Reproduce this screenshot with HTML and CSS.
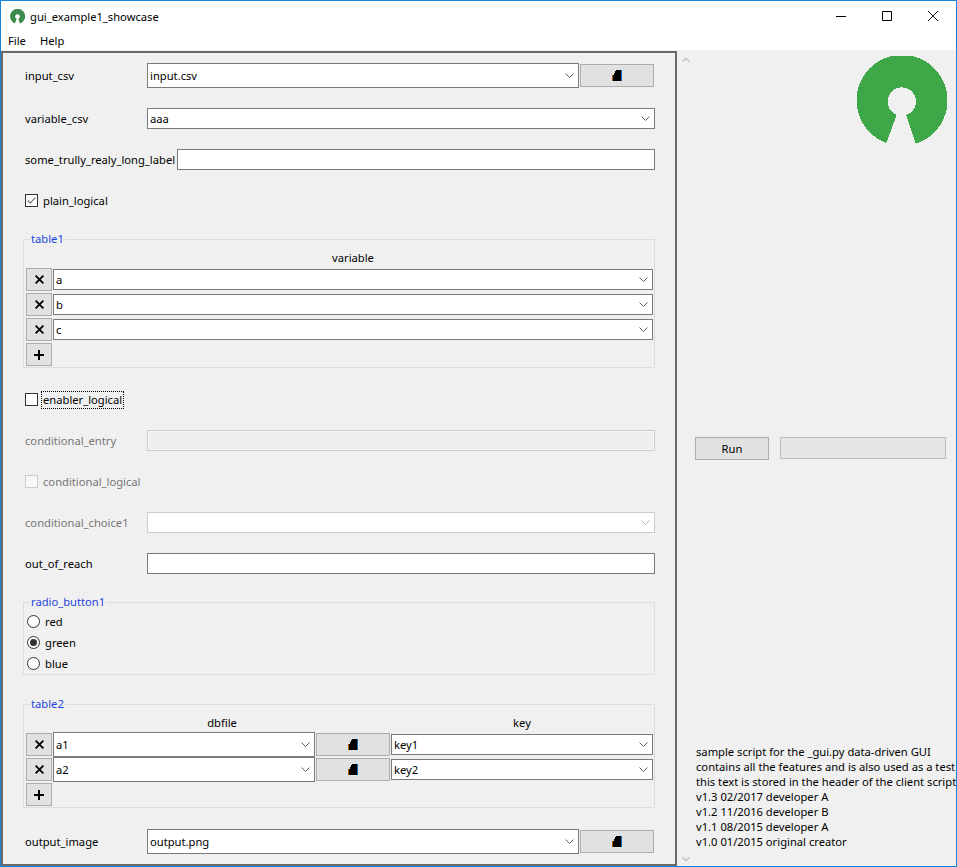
FILE: index.html
```html
<!DOCTYPE html>
<html lang="en">
<head>
<meta charset="utf-8">
<title>gui_example1_showcase</title>
<link rel="stylesheet" href="styles.css">
</head>
<body>
<svg class="sprite" xmlns="http://www.w3.org/2000/svg">
  <symbol id="chev" viewBox="0 0 9 5"><path d="M.5 .5 4.5 4.5 8.5 .5" fill="none" stroke="currentColor" stroke-width="1"/></symbol>
  <symbol id="folder" viewBox="0 0 10 11"><path d="M0 5V11H1V5Z" fill="#b85c00"/><path d="M1 11V5H2V3H3V1H4V0H9V11Z" fill="#000"/><path d="M9 0H10V11H9Z" fill="#0a6fc0"/></symbol>
  <symbol id="x" viewBox="0 0 9 9"><path d="M.6 .6 8.4 8.4M8.4 .6 .6 8.4" fill="none" stroke="#000" stroke-width="1.8"/></symbol>
  <symbol id="plus" viewBox="0 0 10 10"><path d="M0 5H10M5 0V10" fill="none" stroke="#000" stroke-width="2"/></symbol>
  <symbol id="osi" viewBox="0 0 91 91"><path d="M30.3 87A45.5 45.5 0 1 1 59.7 87.7L50.3 59A14.2 14.2 0 1 0 40.7 58.8Z" fill="currentColor"/></symbol>
  <symbol id="check" viewBox="0 0 13 13"><path d="M2 6.5 5 9.5 11 3" fill="none" stroke="#666" stroke-width="1.3"/></symbol>
</svg>
<div class="window">
  <header class="titlebar">
    <svg class="app-icon"><use href="#osi"/></svg>
    <span class="app-title">gui_example1_showcase</span>
    <div class="controls">
      <div class="control"><svg class="ctl" viewBox="0 0 10 10"><path d="M0 5.5H10" stroke="#000" fill="none"/></svg></div>
      <div class="control"><svg class="ctl" viewBox="0 0 10 10"><path d="M.5 .5H9.5V9.5H.5Z" stroke="#000" fill="none"/></svg></div>
      <div class="control"><svg class="ctl" viewBox="0 0 10 10"><path d="M0 0 10 10M10 0 0 10" stroke="#000" fill="none" stroke-width=".9"/></svg></div>
    </div>
  </header>
  <nav class="menubar"><span>File</span><span>Help</span></nav>
  <main class="main">
    <section class="form">
      <div class="row">
        <label class="label">input_csv</label>
        <div class="combo tall"><span class="value">input.csv</span><svg class="chev"><use href="#chev"/></svg></div>
        <button class="btn file"><svg class="folder"><use href="#folder"/></svg></button>
      </div>
      <div class="row">
        <label class="label">variable_csv</label>
        <div class="combo"><span class="value">aaa</span><svg class="chev"><use href="#chev"/></svg></div>
      </div>
      <div class="row">
        <label class="label long">some_trully_realy_long_label</label>
        <div class="entry"></div>
      </div>
      <div class="row">
        <span class="box"><svg class="check"><use href="#check"/></svg></span>
        <span class="box-label">plain_logical</span>
      </div>
      <div class="frame">
        <span class="legend">table1</span>
        <div class="thead"><span class="th">variable</span></div>
        <div class="trow"><button class="btn icon"><svg class="ix"><use href="#x"/></svg></button><div class="combo"><span class="value">a</span><svg class="chev"><use href="#chev"/></svg></div></div>
        <div class="trow"><button class="btn icon"><svg class="ix"><use href="#x"/></svg></button><div class="combo"><span class="value">b</span><svg class="chev"><use href="#chev"/></svg></div></div>
        <div class="trow"><button class="btn icon"><svg class="ix"><use href="#x"/></svg></button><div class="combo"><span class="value">c</span><svg class="chev"><use href="#chev"/></svg></div></div>
        <button class="btn icon add"><svg class="ip"><use href="#plus"/></svg></button>
      </div>
      <div class="row">
        <span class="box"></span>
        <span class="box-label focus">enabler_logical</span>
      </div>
      <div class="row disabled">
        <label class="label">conditional_entry</label>
        <div class="entry off"></div>
      </div>
      <div class="row disabled">
        <span class="box"></span>
        <span class="box-label">conditional_logical</span>
      </div>
      <div class="row disabled">
        <label class="label">conditional_choice1</label>
        <div class="combo"><svg class="chev"><use href="#chev"/></svg></div>
      </div>
      <div class="row">
        <label class="label">out_of_reach</label>
        <div class="entry"></div>
      </div>
      <div class="frame radios">
        <span class="legend">radio_button1</span>
        <div class="radio-row"><span class="radio"></span><span>red</span></div>
        <div class="radio-row"><span class="radio on"></span><span>green</span></div>
        <div class="radio-row"><span class="radio"></span><span>blue</span></div>
      </div>
      <div class="frame">
        <span class="legend">table2</span>
        <div class="thead multi"><span class="th c1">dbfile</span><span class="th c2">key</span></div>
        <div class="trow">
          <button class="btn icon"><svg class="ix"><use href="#x"/></svg></button>
          <div class="combo tall db"><span class="value">a1</span><svg class="chev"><use href="#chev"/></svg></div>
          <button class="btn file"><svg class="folder"><use href="#folder"/></svg></button>
          <div class="combo"><span class="value">key1</span><svg class="chev"><use href="#chev"/></svg></div>
        </div>
        <div class="trow">
          <button class="btn icon"><svg class="ix"><use href="#x"/></svg></button>
          <div class="combo tall db"><span class="value">a2</span><svg class="chev"><use href="#chev"/></svg></div>
          <button class="btn file"><svg class="folder"><use href="#folder"/></svg></button>
          <div class="combo"><span class="value">key2</span><svg class="chev"><use href="#chev"/></svg></div>
        </div>
        <button class="btn icon add"><svg class="ip"><use href="#plus"/></svg></button>
      </div>
      <div class="row">
        <label class="label">output_image</label>
        <div class="combo tall"><span class="value">output.png</span><svg class="chev"><use href="#chev"/></svg></div>
        <button class="btn file"><svg class="folder"><use href="#folder"/></svg></button>
      </div>
    </section>
    <aside class="side">
      <div class="scroller">
        <svg class="arrow" viewBox="0 0 8 6"><path d="M.5 3.5 4 .5 7.5 3.5V5.5L4 2.5 .5 5.5Z" fill="#c4c4c4"/></svg>
        <svg class="arrow" viewBox="0 0 8 6"><path d="M.5 .5 4 3.5 7.5 .5V2.5L4 5.5 .5 2.5Z" fill="#c4c4c4"/></svg>
      </div>
      <div class="side-body">
        <svg class="logo"><use href="#osi"/></svg>
        <div class="run-row">
          <button class="btn run">Run</button>
          <div class="progress"></div>
        </div>
        <div class="about">
          <div>sample script for the _gui.py data-driven GUI</div>
          <div>contains all the features and is also used as a test</div>
          <div>this text is stored in the header of the client script</div>
          <div>v1.3 02/2017 developer A</div>
          <div>v1.2 11/2016 developer B</div>
          <div>v1.1 08/2015 developer A</div>
          <div>v1.0 01/2015 original creator</div>
        </div>
      </div>
    </aside>
  </main>
</div>
</body>
</html>
```

FILE: styles.css
```css
* { box-sizing: border-box; }
html, body { margin: 0; padding: 0; }
body { font-family: "Noto Sans", "Open Sans", sans-serif; font-size: 11.2px; line-height: 16px; color: #000; background: #f0f0f0; }
.sprite { display: none; }
svg { display: block; }
.window { width: 957px; height: 867px; border: 1px solid #1883d7; display: flex; flex-direction: column; background: #f0f0f0; }
.titlebar { height: 30px; background: #fff; display: flex; align-items: center; flex: none; }
.app-icon { width: 15px; height: 15px; margin: 1px 0 0 9px; color: #3c8a4c; }
.app-title { margin: 1px 0 0 5px; }
.controls { margin-left: auto; display: flex; align-self: flex-start; }
.control { width: 46px; height: 29px; display: flex; align-items: center; justify-content: center; }
.ctl { width: 10px; height: 10px; }
.menubar { height: 19px; background: #fff; display: flex; gap: 14px; padding-left: 7px; align-items: center; flex: none; }
.main { flex: 1; display: flex; min-height: 0; }

.form { width: 676px; margin-top: 1px; border: 2px solid #696969; padding: 10px 20px 0; display: flex; flex-direction: column; gap: 20px; flex: none; }
.row { display: flex; align-items: center; height: 21px; padding-left: 2px; flex: none; }
.row:has(.tall) { height: 25px; padding-right: 1px; }
.label { width: 122px; white-space: nowrap; flex: none; }
.label.long { width: 152px; }
.combo, .entry { flex: 1; height: 21px; border: 1px solid #7a7a7a; background: #fff; display: flex; align-items: center; min-width: 0; }
.combo.tall { height: 25px; }
.combo { padding: 0 4px 0 2px; justify-content: space-between; }
.chev { width: 9px; height: 5px; color: #606060; margin-left: auto; }
.btn { font: inherit; color: #000; background: #e1e1e1; border: 1px solid #adadad; padding: 0; display: flex; align-items: center; justify-content: center; flex: none; }
.btn.file { width: 74px; height: 23px; margin-left: 1px; }
.folder { width: 10px; height: 11px; }
.box { width: 13px; height: 13px; border: 1px solid #333; background: #fff; flex: none; }
.check { width: 11px; height: 11px; }
.box-label { margin-left: 5px; }
.box-label.focus { margin-left: 4px; padding: 0 1px; outline: 1px dotted #000; outline-offset: 0; height: 16px; }

.disabled { color: #777; }
.disabled .box { border-color: #ccc; background: #f8f8f8; }
.disabled .combo, .disabled .entry { border-color: #ccc; }
.disabled .chev { color: #b5b5b5; }
.entry.off { background: #efefef; box-shadow: inset 0 0 0 1px #f6f6f6; }

.frame { position: relative; border: 1px solid #dcdcdc; margin: 8px 0 1px; padding: 0 1px 1px 2px; flex: none; }
.legend { position: absolute; left: 6px; top: -9px; padding: 0 1px; background: #f0f0f0; color: #1c45dc; }
.thead { height: 27px; display: flex; padding: 10px 0 0 27px; justify-content: center; }
.th { text-align: center; }
.thead.multi { justify-content: flex-start; padding-left: 0; }
.th.c1 { width: 338px; margin-left: 27px; }
.th.c2 { width: 262px; flex: none; }
.trow { display: flex; align-items: center; height: 25px; gap: 1px; }
.trow .btn.file { margin-left: 0; }
.btn.icon { width: 26px; height: 23px; }
.ix { width: 9px; height: 9px; }
.ip { width: 10px; height: 10px; }
.btn.add { margin-top: 1px; }
.combo.db { flex: none; width: 262px; }

.radios { height: 73px; padding: 8px 0 0 3px; }
.radio-row { display: flex; align-items: center; height: 21px; gap: 5px; }
.radio { width: 13px; height: 13px; border: 1px solid #333; border-radius: 50%; background: #fff; display: flex; align-items: center; justify-content: center; }
.radio.on::after { content: ""; width: 7px; height: 7px; border-radius: 50%; background: #333; }

.side { flex: 1; display: flex; min-width: 0; }
.scroller { width: 18px; flex: none; padding: 7px 0 4px 5px; display: flex; flex-direction: column; justify-content: space-between; }
.arrow { width: 8px; height: 6px; }
.side-body { flex: 1; display: flex; flex-direction: column; min-width: 0; padding-bottom: 17px; }
.logo { width: 91px; height: 91px; color: #3ea748; align-self: flex-end; margin: 6px 9px 0 0; shape-rendering: crispEdges; }
.run-row { display: flex; align-items: flex-start; gap: 11px; margin-top: 290px; }
.btn.run { width: 74px; height: 23px; }
.progress { width: 166px; height: 22px; border: 1px solid #bcbcbc; background: #e6e6e6; }
.about { margin-top: auto; line-height: 15px; padding-left: 1px; white-space: nowrap; }
```
